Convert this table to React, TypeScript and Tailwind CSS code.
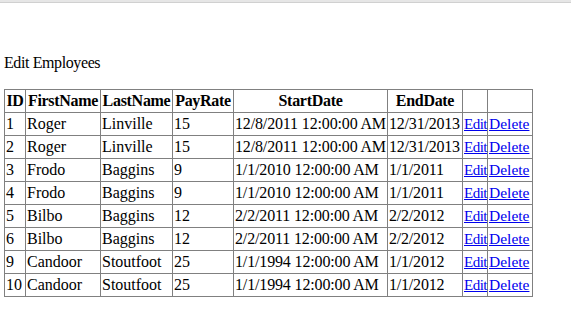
import React from 'react';

type Employee = {
  id: number;
  first: string;
  last: string;
  rate: number;
  start: string;
  end: string;
};

const employees: Employee[] = [
  { id: 1, first: 'Roger', last: 'Linville', rate: 15, start: '12/8/2011 12:00:00 AM', end: '12/31/2013' },
  { id: 2, first: 'Roger', last: 'Linville', rate: 15, start: '12/8/2011 12:00:00 AM', end: '12/31/2013' },
  { id: 3, first: 'Frodo', last: 'Baggins', rate: 9, start: '1/1/2010 12:00:00 AM', end: '1/1/2011' },
  { id: 4, first: 'Frodo', last: 'Baggins', rate: 9, start: '1/1/2010 12:00:00 AM', end: '1/1/2011' },
  { id: 5, first: 'Bilbo', last: 'Baggins', rate: 12, start: '2/2/2011 12:00:00 AM', end: '2/2/2012' },
  { id: 6, first: 'Bilbo', last: 'Baggins', rate: 12, start: '2/2/2011 12:00:00 AM', end: '2/2/2012' },
  { id: 9, first: 'Candoor', last: 'Stoutfoot', rate: 25, start: '1/1/1994 12:00:00 AM', end: '1/1/2012' },
  { id: 10, first: 'Candoor', last: 'Stoutfoot', rate: 25, start: '1/1/1994 12:00:00 AM', end: '1/1/2012' },
];

// header label + column width (border to border, as in the screenshot)
const headers = [
  { label: 'ID', w: 'w-[21px]' },
  { label: 'FirstName', w: 'w-[75px]' },
  { label: 'LastName', w: 'w-[72px]' },
  { label: 'PayRate', w: 'w-[61px]' },
  { label: 'StartDate', w: 'w-[154px]' },
  { label: 'EndDate', w: 'w-[75px]' },
  { label: '', w: 'w-[25px]' },
  { label: '', w: 'w-[45px]' },
];

const cell = 'border border-[#808080] px-px py-0 h-[23px] leading-[20px] whitespace-nowrap overflow-visible align-middle';

const App: React.FC = () => {
  return (
    <div className="min-h-screen bg-white text-black text-[16px]" style={{ fontFamily: '"Liberation Serif", "Times New Roman", serif' }}>
      {/* browser chrome edge */}
      <div className="h-[3px] bg-[#e6e6e6] border-b border-[#d0d0d0]"></div>

      <div className="px-1 pt-[51px]">
        <p className="leading-[18px] tracking-[-0.4px]">Edit Employees</p>

        <table className="mt-[17px] w-[528px] table-fixed border-collapse border border-[#808080]">
          <thead>
            <tr>
              {headers.map((h, i) => (
                <th key={i} className={`${cell} ${h.w} font-bold text-center tracking-[-0.3px]`}>
                  {h.label}
                </th>
              ))}
            </tr>
          </thead>
          <tbody>
            {employees.map((e) => (
              <tr key={e.id}>
                <td className={cell}>{e.id}</td>
                <td className={cell}>{e.first}</td>
                <td className={cell}>{e.last}</td>
                <td className={cell}>{e.rate}</td>
                <td className={`${cell} tracking-[-0.15px]`}>{e.start}</td>
                <td className={`${cell} tracking-[-0.2px]`}>{e.end}</td>
                <td className={`${cell} text-[15px] tracking-[-0.5px]`}>
                  <a href="#" className="text-[#0000ee] underline">Edit</a>
                </td>
                <td className={`${cell} text-[15.5px]`}>
                  <a href="#" className="text-[#0000ee] underline">Delete</a>
                </td>
              </tr>
            ))}
          </tbody>
        </table>
      </div>
    </div>
  );
};

export default App;
